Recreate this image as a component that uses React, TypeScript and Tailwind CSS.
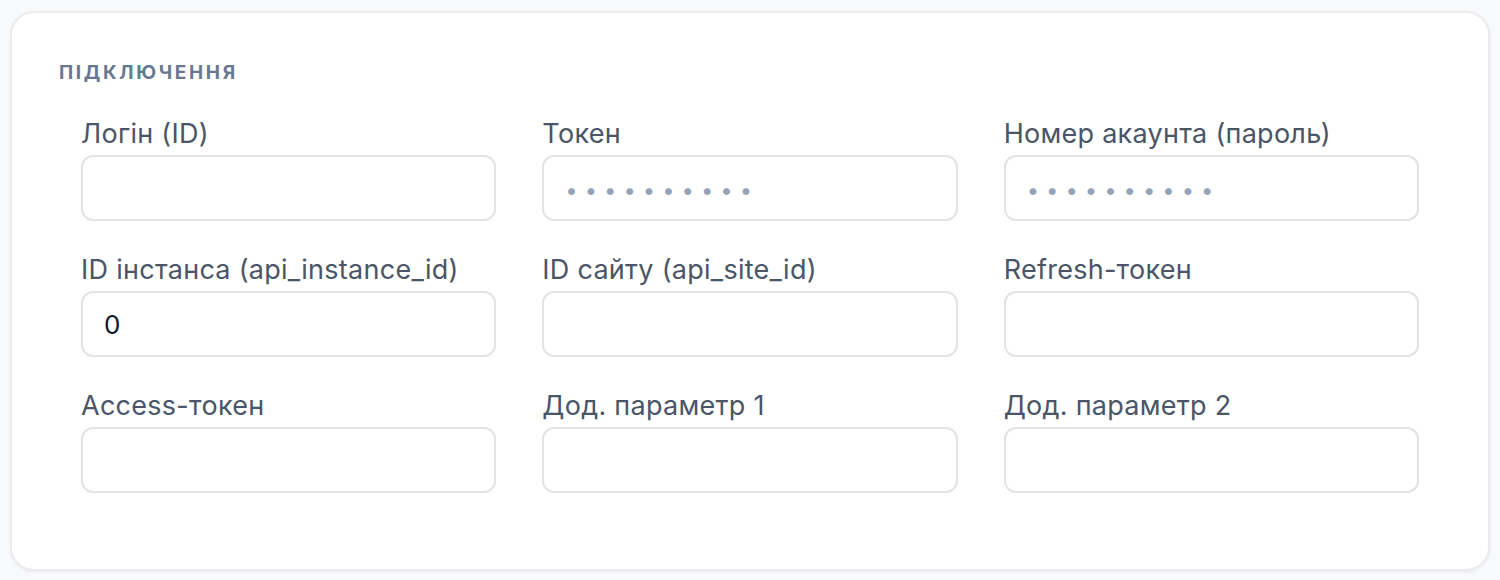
const FIELDS: { label: string; value?: string; secret?: boolean }[] = [
  { label: 'Логін (ID)' },
  { label: 'Токен', secret: true },
  { label: 'Номер акаунта (пароль)', secret: true },
  { label: 'ID інстанса (api_instance_id)', value: '0' },
  { label: 'ID сайту (api_site_id)' },
  { label: 'Refresh-токен' },
  { label: 'Access-токен' },
  { label: 'Дод. параметр 1' },
  { label: 'Дод. параметр 2' },
]

export default function App() {
  return (
    <div className="min-h-[580px] bg-[#f8f9fb] px-[10px] pt-[11px] font-['Inter','Noto_Sans',sans-serif]">
      <section className="h-[560px] w-[1480px] rounded-[24px] border-2 border-[#ececef] bg-white px-[47px] pt-[48px] shadow-[0_1px_3px_rgba(15,23,42,0.06)]">
        <h2 className="m-0 text-[19px] font-bold uppercase leading-6 tracking-[0.14em] text-[#687891]">
          Підключення
        </h2>
        <div className="mt-[33px] grid grid-cols-3 gap-x-[46px] gap-y-[33px] px-[22px]">
          {FIELDS.map((f) => (
            <label key={f.label} className="flex flex-col">
              <span className="mb-[5px] text-[27px] leading-8 tracking-[0.01em] text-[#4a5568]">
                {f.label}
              </span>
              <input
                type="text"
                defaultValue={f.value}
                placeholder={f.secret ? '••••••••••' : undefined}
                className="h-[66px] rounded-[12px] border-2 border-[#e3e3e6] bg-white px-[21px] text-[26px] tracking-[7px] text-[#0f172a] outline-none placeholder:text-[22px] placeholder:text-[#94a3b8]"
              />
            </label>
          ))}
        </div>
      </section>
    </div>
  )
}
